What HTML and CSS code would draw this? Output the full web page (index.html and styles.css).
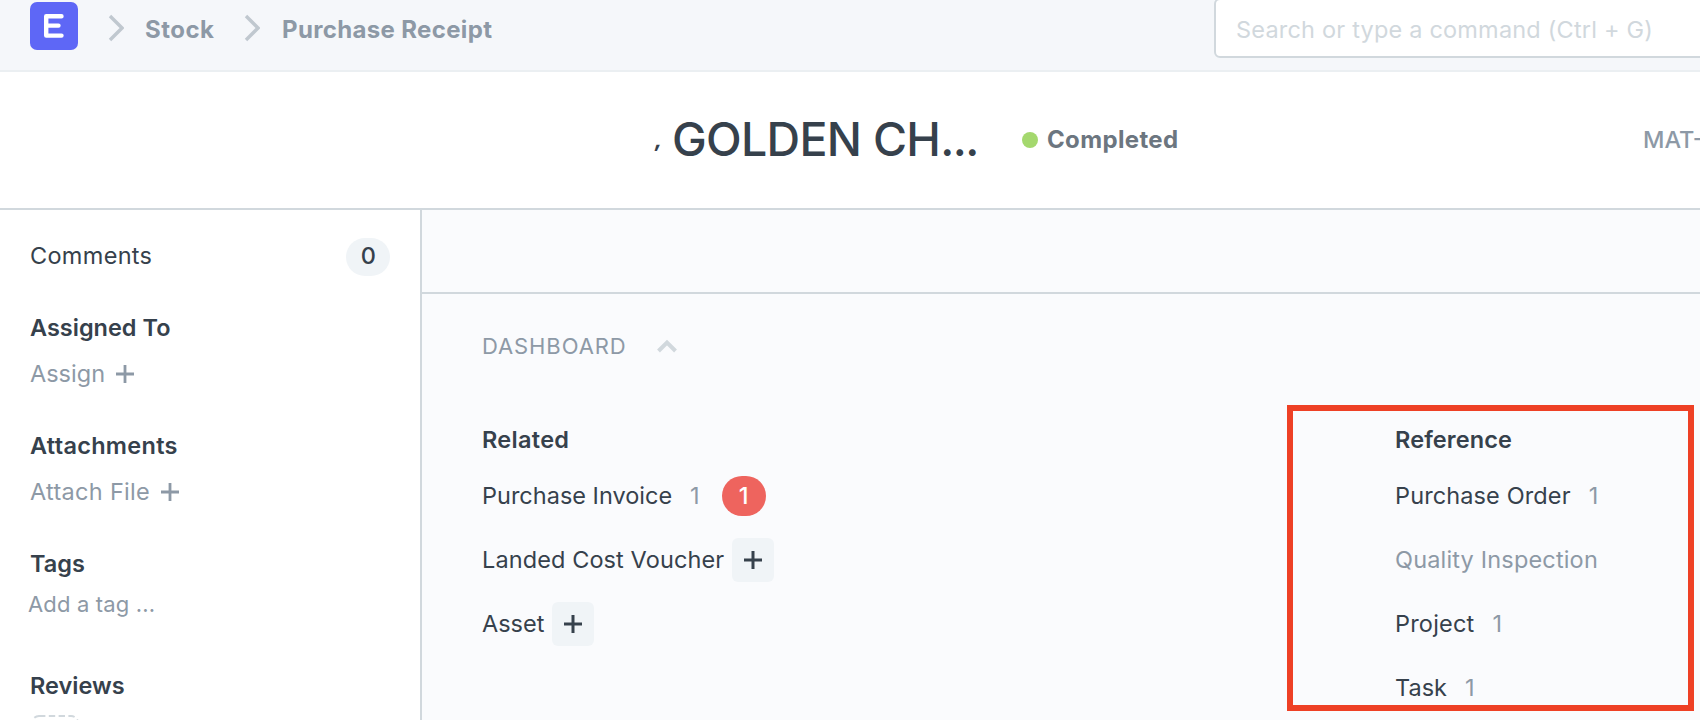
FILE: index.html
```html
<!DOCTYPE html>
<html lang="en">
<head>
<meta charset="utf-8">
<title>Purchase Receipt</title>
<link rel="stylesheet" href="styles.css">
</head>
<body>
<header class="navbar">
  <svg class="logo" width="48" height="48" viewBox="0 0 48 48"><rect width="48" height="48" rx="7" fill="#5e67f6"/><path d="M31.5 14.2H16.2V33.6H31.5M16.2 23.6H28.5" fill="none" stroke="#fff" stroke-width="4.4" stroke-linecap="round" stroke-linejoin="round"/></svg>
  <svg class="sep" width="16" height="28" viewBox="0 0 16 28"><path d="M2 2L14 14L2 26" fill="none" stroke="#c0c8cf" stroke-width="3.4"/></svg>
  <a class="crumb crumb-stock">Stock</a>
  <svg class="sep sep-next" width="16" height="28" viewBox="0 0 16 28"><path d="M2 2L14 14L2 26" fill="none" stroke="#c0c8cf" stroke-width="3.4"/></svg>
  <a class="crumb crumb-doc">Purchase Receipt</a>
  <div class="search">Search or type a command (Ctrl + G)</div>
</header>
<section class="page-head">
  <h1 class="title"><span class="comma">,</span><span class="name">GOLDEN CH<span class="dots">...</span></span></h1>
  <div class="status"><i class="dot"></i><span>Completed</span></div>
  <div class="doc-id">MAT-</div>
</section>
<div class="body">
  <aside class="sidebar">
    <div class="comments"><span>Comments</span><span class="badge">0</span></div>
    <h4 class="label assigned">Assigned To</h4>
    <div class="action assign"><span>Assign</span><svg width="18" height="18" viewBox="0 0 18 18"><path d="M0 9H18M9 0V18" stroke="#8d99a6" stroke-width="2.8"/></svg></div>
    <h4 class="label attachments">Attachments</h4>
    <div class="action attach"><span>Attach File</span><svg width="18" height="18" viewBox="0 0 18 18"><path d="M0 9H18M9 0V18" stroke="#8d99a6" stroke-width="2.8"/></svg></div>
    <h4 class="label tags">Tags</h4>
    <div class="add-tag">Add a tag ...</div>
    <h4 class="label reviews">Reviews</h4>
    <svg class="review-add" width="48" height="48" viewBox="0 0 48 48"><rect x="1" y="1" width="46" height="46" rx="7" fill="none" stroke="#d1d8dd" stroke-width="2" stroke-dasharray="6.4 3.4"/></svg>
  </aside>
  <main class="main">
    <div class="toolbar"></div>
    <section class="dashboard">
      <div class="dash-head"><span>DASHBOARD</span><svg width="20" height="14" viewBox="0 0 20 14"><path d="M1.5 12L10 3.5L18.5 12" fill="none" stroke="#d1d8dd" stroke-width="4"/></svg></div>
      <div class="columns">
        <div class="related">
          <h4 class="label related-label">Related</h4>
          <div class="row"><span class="invoice">Purchase Invoice</span><span class="count">1</span><span class="open">1</span></div>
          <div class="row"><span class="voucher">Landed Cost Voucher</span><span class="add"><svg width="18" height="18" viewBox="0 0 18 18"><path d="M0 9H18M9 0V18" stroke="#36414c" stroke-width="3"/></svg></span></div>
          <div class="row"><span class="asset">Asset</span><span class="add"><svg width="18" height="18" viewBox="0 0 18 18"><path d="M0 9H18M9 0V18" stroke="#36414c" stroke-width="3"/></svg></span></div>
        </div>
        <div class="reference">
          <h4 class="label reference-label">Reference</h4>
          <div class="row"><span class="order">Purchase Order</span><span class="count">1</span></div>
          <div class="row"><span class="quality">Quality Inspection</span></div>
          <div class="row"><span class="project">Project</span><span class="count">1</span></div>
          <div class="row"><span class="task">Task</span><span class="count">1</span></div>
        </div>
      </div>
    </section>
  </main>
</div>
</body>
</html>
```
FILE: styles.css
```css
* { box-sizing: border-box; }
body {
  margin: 0;
  width: 1700px;
  height: 720px;
  overflow: hidden;
  background: #fff;
  color: #36414c;
  font: 400 23.5px/24px Inter, "Liberation Sans", sans-serif;
  white-space: nowrap;
}
h1, h4 { margin: 0; }
svg { display: block; flex: none; }

.navbar {
  display: flex;
  height: 72px;
  overflow: hidden;
  padding-left: 30px;
  background: #f5f7fa;
  border-bottom: 2px solid #ebeff2;
}
.logo { margin-top: 2px; }
.sep { margin: 14px 0 0 30px; }
.sep-next { margin-left: -1px; }
.crumb { flex: none; margin-top: 18px; padding-left: 21px; color: #8d99a6; font-size: 24px; font-weight: 700; letter-spacing: 0.35px; }
.crumb-stock { width: 121px; letter-spacing: 0.5px; }
.crumb-doc { width: 954px; padding-left: 22px; }
.search {
  width: 500px;
  height: 60px;
  margin-top: -2px;
  padding: 18px 0 0 20px;
  flex: none;
  border: 2px solid #d1d8dd;
  border-radius: 6px;
  background: #fff;
  color: #d1d8dd;
  letter-spacing: 0.2px;
}

.page-head {
  display: flex;
  align-items: center;
  height: 138px;
  overflow: hidden;
  padding-left: 654px;
  border-bottom: 2px solid #d1d8dd;
}
.title { display: flex; flex: none; width: 368px; font-size: 46.5px; line-height: 58px; font-weight: 550; }
.comma { width: 18px; padding-left: 1px; font-size: 20px; line-height: 62px; font-style: italic; font-weight: 800; }
.name { margin-top: 1px; letter-spacing: -0.7px; }
.dots { letter-spacing: -1.6px; }
.status { display: flex; flex: none; align-items: center; gap: 9px; width: 621px; color: #6c7680; font-size: 24px; font-weight: 700; letter-spacing: 0.35px; }
.dot { width: 16px; height: 16px; border-radius: 50%; background: #a4d86e; }
.doc-id { color: #8d99a6; font-weight: 500; }

.body { display: flex; height: 510px; overflow: hidden; }
.sidebar { width: 422px; flex: none; padding: 28px 30px 0 30px; border-right: 2px solid #d1d8dd; }
.comments { display: flex; justify-content: space-between; height: 38px; padding-top: 6px; letter-spacing: 0.3px; }
.badge {
  width: 44px;
  height: 38px;
  margin-top: -6px;
  padding-left: 1px;
  border-radius: 19px;
  background: #f0f4f7;
  font-weight: 500;
  line-height: 36px;
  text-align: center;
}
.label { font-size: 23.5px; font-weight: 600; line-height: 24px; }
.action { display: flex; align-items: center; gap: 11px; height: 24px; color: #8d99a6; }
.assigned { margin-top: 40px; }
.assign, .attach { margin-top: 22px; }
.attach { letter-spacing: 0.3px; }
.attachments, .tags { margin-top: 48px; }
.attachments { letter-spacing: 0.3px; }
.add-tag { margin: 16px 0 0 -2px; color: #8d99a6; font-size: 22px; letter-spacing: 0.15px; }
.reviews { margin-top: 58px; }
.review-add { margin: 17px 0 0 1px; }

.main { flex: 1; background: #fafbfd; }
.toolbar { height: 84px; border-bottom: 2px solid #d1d8dd; }
.dashboard { padding: 40px 6px 0 60px; }
.dash-head { display: flex; align-items: center; gap: 30px; height: 24px; color: #8d99a6; font-size: 22px; letter-spacing: 0.9px; }
.columns { display: flex; justify-content: space-between; margin-top: 47px; }
.related { padding-top: 23px; }
.related-label { letter-spacing: 0.3px; }
.reference-label { letter-spacing: 0.1px; }
.reference { width: 407px; height: 306px; padding: 17px 0 0 102px; border: 6px solid #ee4025; overflow: hidden; }
.row { display: flex; align-items: center; height: 64px; }
.label + .row { margin-top: 12px; }
.count { padding-left: 18px; color: #8d99a6; }
.open {
  width: 44px;
  height: 40px;
  margin-left: 22px;
  border-radius: 20px;
  background: #ee645e;
  color: #fff;
  font-weight: 500;
  line-height: 40px;
  text-align: center;
}
.add { display: grid; place-items: center; width: 42px; height: 44px; margin-left: 8px; border-radius: 6px; background: #f0f4f7; }
.voucher { letter-spacing: 0.1px; }
.order { letter-spacing: 0.12px; }
.project { letter-spacing: 0.2px; }
.quality { color: #8d99a6; letter-spacing: 0.17px; }
```
